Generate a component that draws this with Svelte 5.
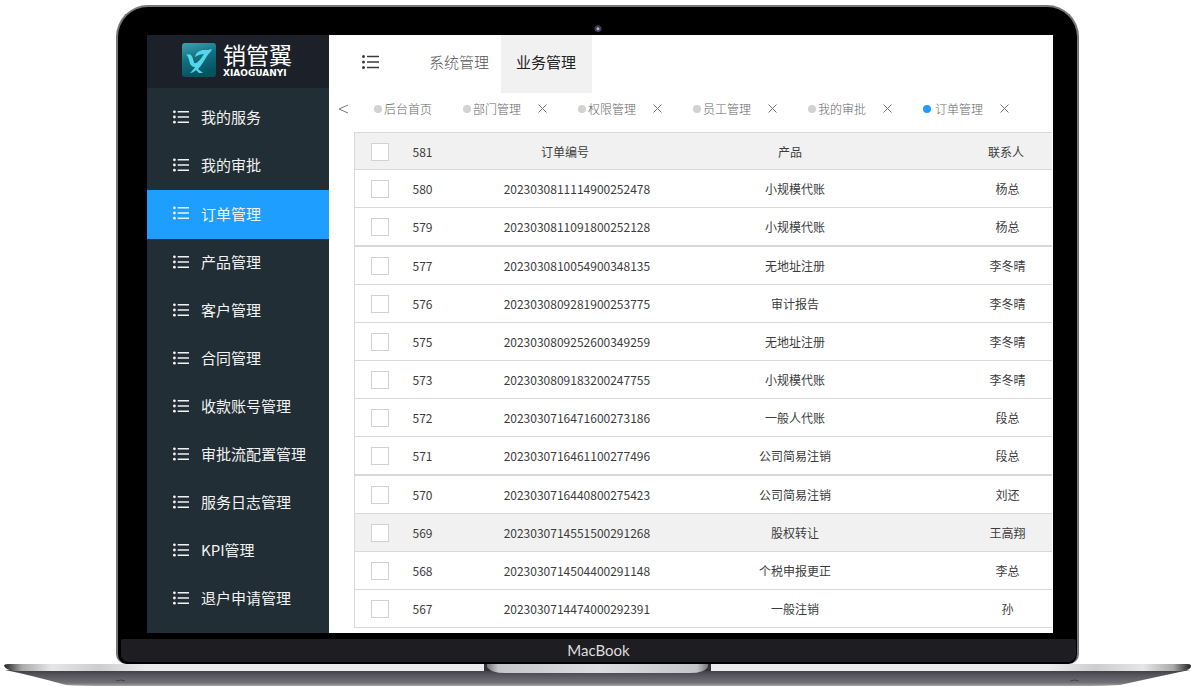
<script>
  const menus = [
    '我的服务',
    '我的审批',
    '订单管理',
    '产品管理',
    '客户管理',
    '合同管理',
    '收款账号管理',
    '审批流配置管理',
    '服务日志管理',
    'KPI管理',
    '退户申请管理',
  ];

  const modules = ['系统管理', '业务管理'];

  let tabs = $state([
    { name: '后台首页', fixed: true },
    { name: '部门管理' },
    { name: '权限管理' },
    { name: '员工管理' },
    { name: '我的审批' },
    { name: '订单管理' },
  ]);

  const orders = [
    { id: 580, no: '2023030811114900252478', product: '小规模代账', contact: '杨总' },
    { id: 579, no: '2023030811091800252128', product: '小规模代账', contact: '杨总', group: true },
    { id: 577, no: '2023030810054900348135', product: '无地址注册', contact: '李冬晴' },
    { id: 576, no: '2023030809281900253775', product: '审计报告', contact: '李冬晴' },
    { id: 575, no: '2023030809252600349259', product: '无地址注册', contact: '李冬晴' },
    { id: 573, no: '2023030809183200247755', product: '小规模代账', contact: '李冬晴' },
    { id: 572, no: '2023030716471600273186', product: '一般人代账', contact: '段总' },
    { id: 571, no: '2023030716461100277496', product: '公司简易注销', contact: '段总', group: true },
    { id: 570, no: '2023030716440800275423', product: '公司简易注销', contact: '刘还' },
    { id: 569, no: '2023030714551500291268', product: '股权转让', contact: '王高翔', marked: true },
    { id: 568, no: '2023030714504400291148', product: '个税申报更正', contact: '李总' },
    { id: 567, no: '2023030714474000292391', product: '一般注销', contact: '孙' },
  ];

  let activeMenu = $state('订单管理');
  let activeModule = $state('业务管理');
  let activeTab = $state('订单管理');

  function closeTab(name) {
    tabs = tabs.filter((tab) => tab.name !== name);
  }
</script>

{#snippet listIcon()}
  <svg class="list-icon" viewBox="0 0 17 14" aria-hidden="true">
    <path d="M5 1.5h12M5 7h12M5 12.5h12" stroke="currentColor" stroke-width="1.5" />
    <circle cx="1.5" cy="1.5" r="1.5" fill="currentColor" />
    <circle cx="1.5" cy="7" r="1.5" fill="currentColor" />
    <circle cx="1.5" cy="12.5" r="1.5" fill="currentColor" />
  </svg>
{/snippet}

<div class="laptop">
  <div class="lid">
    <span class="camera"></span>

    <div class="screen">
      <aside class="sidebar">
        <div class="brand">
          <svg class="brand-mark" viewBox="0 0 34 34" aria-hidden="true">
            <defs>
              <linearGradient id="mark" x1="0" y1="0" x2="0.3" y2="1">
                <stop offset="0" stop-color="#3fa3b3" />
                <stop offset="0.5" stop-color="#12707f" />
                <stop offset="1" stop-color="#055361" />
              </linearGradient>
            </defs>
            <rect width="34" height="34" rx="3" fill="url(#mark)" />
            <path
              d="M4 12C8 10 10 12 11 16C12 19 12 21 14 20C17 19 20 14 22 11C19 11 16 12 13 14C14 9 18 7 22 7C25 7 27 7 30 6C29 9 27 10 25 13C22 18 19 23 16 26L21 30L17 30L14 27C12 29 10 30 8 30C10 28 12 26 13 24C9 24 8 21 7 17C6 14 6 13 4 12Z"
              fill="#56d6ea"
            />
          </svg>
          <div class="brand-text">
            <span class="brand-name">销管翼</span>
            <span class="brand-latin">XIAOGUANYI</span>
          </div>
        </div>

        <nav class="menu">
          {#each menus as menu (menu)}
            <button class="menu-item" class:active={menu === activeMenu} onclick={() => (activeMenu = menu)}>
              {@render listIcon()}
              {menu}
            </button>
          {/each}
        </nav>
      </aside>

      <main class="main">
        <header class="topbar">
          <button class="collapse" aria-label="折叠菜单">{@render listIcon()}</button>
          {#each modules as name (name)}
            <button class="module" class:active={name === activeModule} onclick={() => (activeModule = name)}>
              {name}
            </button>
          {/each}
        </header>

        <div class="tabs">
          <button class="tabs-prev" aria-label="向左">
            <svg viewBox="0 0 10 10" aria-hidden="true"><path d="M10 1L1 5l9 4" /></svg>
          </button>
          {#each tabs as tab (tab.name)}
            <div class="tab" class:active={tab.name === activeTab}>
              <button class="tab-name" onclick={() => (activeTab = tab.name)}>
                <span class="dot"></span>{tab.name}
              </button>
              {#if !tab.fixed}
                <button class="tab-close" aria-label="关闭{tab.name}" onclick={() => closeTab(tab.name)}>
                  <svg viewBox="0 0 9 9" aria-hidden="true"><path d="M.5.5l8 8M8.5.5l-8 8" /></svg>
                </button>
              {/if}
            </div>
          {/each}
        </div>

        <table class="orders">
          <thead>
            <tr>
              <th class="col-check"><input type="checkbox" aria-label="全选" /></th>
              <th class="col-id">581</th>
              <th class="col-no">订单编号</th>
              <th class="col-product">产品</th>
              <th class="col-contact">联系人</th>
            </tr>
          </thead>
          <tbody>
            {#each orders as order (order.id)}
              <tr class:group={order.group} class:marked={order.marked}>
                <td><input type="checkbox" aria-label="选择 {order.id}" /></td>
                <td>{order.id}</td>
                <td class="col-no">{order.no}</td>
                <td class="col-product">{order.product}</td>
                <td class="col-contact">{order.contact}</td>
              </tr>
            {/each}
          </tbody>
        </table>
      </main>
    </div>

    <div class="chin">MacBook</div>
  </div>

  <svg class="base" viewBox="0 0 1200 25" preserveAspectRatio="none" aria-hidden="true">
    <defs>
      <linearGradient id="deck" x1="0" x2="1" y1="0" y2="0">
        <stop offset="0" stop-color="#222" />
        <stop offset="0.015" stop-color="#aaa" />
        <stop offset="0.04" stop-color="#e6e6e8" />
        <stop offset="0.08" stop-color="#cdcdd0" />
        <stop offset="0.12" stop-color="#ececee" />
        <stop offset="0.88" stop-color="#ececee" />
        <stop offset="0.92" stop-color="#cdcdd0" />
        <stop offset="0.96" stop-color="#e6e6e8" />
        <stop offset="0.985" stop-color="#aaa" />
        <stop offset="1" stop-color="#222" />
      </linearGradient>
      <linearGradient id="under" x1="0" x2="0" y1="0" y2="1">
        <stop offset="0" stop-color="#3d3c41" />
        <stop offset="0.3" stop-color="#55545a" />
        <stop offset="0.8" stop-color="#727177" />
        <stop offset="1" stop-color="#a5a5a8" />
      </linearGradient>
      <linearGradient id="notch" x1="0" x2="1" y1="0" y2="0">
        <stop offset="0" stop-color="#77777b" />
        <stop offset="0.05" stop-color="#c4c5c9" />
        <stop offset="0.5" stop-color="#dcdde0" />
        <stop offset="0.95" stop-color="#c4c5c9" />
        <stop offset="1" stop-color="#77777b" />
      </linearGradient>
    </defs>
    <path d="M5 6Q30 11 66 21Q80 22 110 22H1090Q1104 22 1120 21Q1165 11 1190 6Z" fill="url(#under)" />
    <path d="M4 2Q4 0 8 0H1188Q1191 0 1191 2Q1191 6 1182 7H14Q6 6 4 2Z" fill="url(#deck)" />
    <path d="M484 0H711V7H484Z" fill="#333237" />
    <path d="M487 0H708V3Q704 9 690 9H505Q491 9 487 3Z" fill="url(#notch)" />
    <path d="M116 17q5-2 9 0M1070 17q5-2 9 0" fill="none" stroke="#44434a" />
  </svg>
</div>

<style>
  :global(body) {
    background: #fff;
  }

  .laptop {
    font-family: 'Noto Sans CJK SC', sans-serif;
    font-size: 12px;
    padding-top: 5px;
    color: #3c3c3c;
  }

  button {
    font: inherit;
    color: inherit;
    background: none;
    border: 0;
    padding: 0;
    cursor: pointer;
    white-space: nowrap;
  }

  .lid {
    position: relative;
    margin: 0 121px 0 116px;
    padding: 28px 24px 2px 29px;
    background: #000;
    border: 2px solid #77777a;
    border-width: 2px 2px 0 2px;
    border-radius: 32px 32px 10px 10px;
  }

  .camera {
    position: absolute;
    top: 17px;
    left: 50%;
    width: 8px;
    height: 8px;
    margin-left: -4px;
    border-radius: 50%;
    background: radial-gradient(circle at 50% 60%, #a8a8d0 0 1px, #33336a 2px, #444 3px, #000 4px);
  }

  .screen {
    display: flex;
    background: #fff;
  }

  .sidebar {
    flex: none;
    width: 182px;
    background: #222e35;
    color: #f2f2f2;
  }

  .brand {
    display: flex;
    align-items: center;
    gap: 7px;
    height: 53px;
    box-sizing: border-box;
    padding: 0 0 3px 35px;
    background: #1c2029;
    color: #fff;
  }

  .brand-mark {
    width: 34px;
    height: 34px;
  }

  .brand-text {
    display: flex;
    flex-direction: column;
  }

  .brand-name {
    font-size: 23px;
    line-height: 22px;
  }

  .brand-latin {
    margin-top: 4px;
    font: bold 9px/8px 'DejaVu Sans', sans-serif;
  }

  .menu {
    display: flex;
    flex-direction: column;
    padding: 6px 0 9px;
  }

  .menu-item {
    display: flex;
    align-items: center;
    gap: 12px;
    height: 48px;
    padding: 0 0 3px 26px;
    font-size: 15px;
  }

  .menu-item.active {
    height: 49px;
    background: #1e9fff;
  }

  .list-icon {
    display: block;
    width: 17px;
    height: 14px;
  }

  .menu-item .list-icon {
    width: 16px;
  }

  .main {
    flex: 1;
    min-width: 0;
  }

  .topbar {
    display: flex;
    height: 58px;
    padding-left: 33px;
    font-size: 15px;
  }

  .collapse {
    margin-right: 38px;
    padding-bottom: 5px;
  }

  .module {
    padding: 0 12px 5px;
    font-weight: 300;
    color: #555;
  }

  .module.active {
    padding: 0 16px 5px 15px;
    background: #f1f1f1;
    color: #222;
    font-weight: 400;
  }

  .tabs {
    display: flex;
    align-items: center;
    gap: 31px;
    height: 39px;
    box-sizing: border-box;
    padding: 0 0 8px 9px;
    font-weight: 300;
    color: #666;
    overflow: hidden;
  }

  .tabs svg {
    display: block;
    fill: none;
    stroke: #777;
  }

  .tabs-prev {
    margin-right: -5px;
  }

  .tabs-prev svg {
    width: 10px;
    height: 10px;
  }

  .tab {
    display: flex;
    align-items: center;
    gap: 17px;
  }

  .tab-name {
    display: flex;
    align-items: center;
    gap: 2px;
  }

  .dot {
    width: 8px;
    height: 8px;
    border-radius: 50%;
    background: #d2d2d2;
  }

  .tab.active .dot {
    background: #1e9fff;
  }

  .tab.active .tab-name {
    gap: 4px;
  }

  .tab-close svg {
    width: 9px;
    height: 9px;
  }

  .orders {
    width: calc(100% - 26px);
    margin: 0 1px 5px 25px;
    table-layout: fixed;
    border-collapse: separate;
    border-spacing: 0;
    border: 1px solid #d9d9d9;
    border-width: 1px 0 0 1px;
    text-align: center;
  }

  th,
  td {
    height: 37px;
    padding: 0;
    border-bottom: 1px solid #d9d9d9;
    line-height: 18px;
    font-weight: 400;
    white-space: nowrap;
  }

  th {
    box-sizing: border-box;
    padding-top: 2px;
    background: #f1f1f1;
  }

  .group td {
    border-bottom-width: 2px;
  }

  .marked td {
    background: #f1f1f1;
  }

  .col-check {
    width: 50px;
  }

  .col-id {
    width: 35px;
  }

  .col-no {
    width: 39%;
    padding-left: 2px;
  }

  th.col-no {
    padding-right: 24px;
  }

  .col-product {
    width: 23%;
    padding-left: 6px;
  }

  th.col-product {
    padding-right: 10px;
  }

  .col-contact {
    padding-left: 91px;
  }

  th.col-contact {
    padding-left: 88px;
  }

  input[type='checkbox'] {
    appearance: none;
    display: block;
    width: 18px;
    height: 18px;
    margin: 0 auto;
    border: 1px solid #d2d2d2;
    background: #fff;
  }

  input[type='checkbox']:checked {
    background: #1e9fff;
    border-color: #1e9fff;
  }

  .chin {
    margin: 6px -23px 0 -26px;
    background: #1e1d22;
    border-radius: 2px 2px 8px 8px;
    color: #ddd;
    font: 15px/23px Lato, sans-serif;
    text-align: center;
  }

  .base {
    display: block;
    width: 100%;
    height: 25px;
  }
</style>
